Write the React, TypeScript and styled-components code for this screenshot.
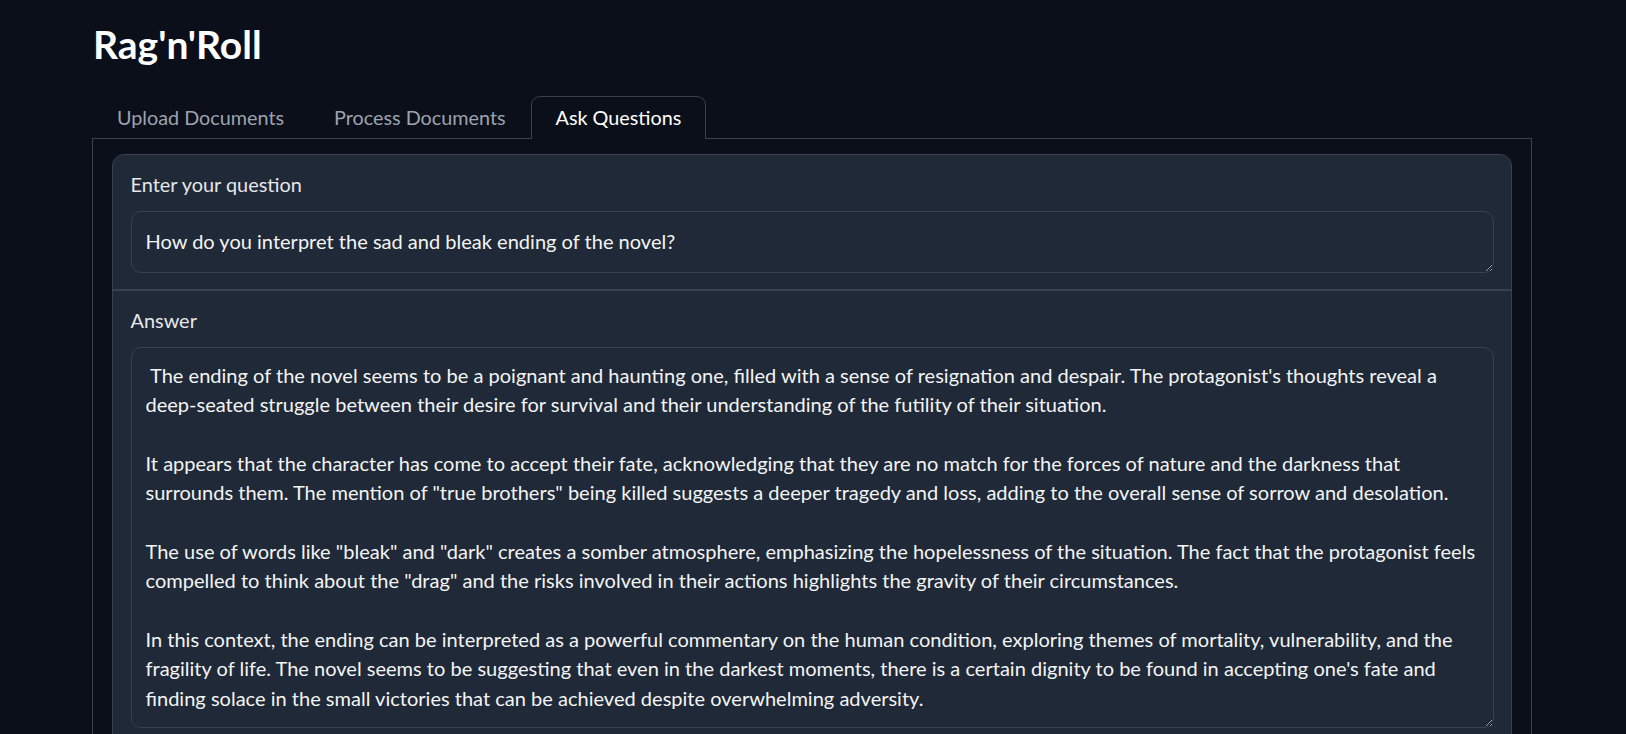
import React from "react";
import styled, { createGlobalStyle } from "styled-components";

const GlobalStyle = createGlobalStyle`
  html, body {
    margin: 0;
    padding: 0;
    background: #0b0f19;
    color-scheme: dark;
  }
  body {
    font-family: Lato, "Noto Sans", sans-serif;
    color: #f3f4f6;
  }
  * { box-sizing: border-box; }
`;

const Page = styled.div`
  max-width: 1442px;
  margin: 0 auto;
  padding-right: 2px;
  display: flex;
  flex-direction: column;
`;

const Title = styled.h1`
  margin: 21px 0 27px 1px;
  font-size: 39px;
  line-height: 1.2;
  font-weight: 700;
  color: #ffffff;
  letter-spacing: 0;
`;

const TabList = styled.div`
  display: flex;
  align-items: flex-end;
  height: 43px;
`;

const Tab = styled.button<{ $active?: boolean }>`
  height: 43px;
  padding: 0 24px;
  margin-bottom: -1px;
  position: relative;
  z-index: 1;
  font-family: inherit;
  font-size: 19.8px;
  line-height: 1;
  color: ${(p) => (p.$active ? "#ffffff" : "#9ca3af")};
  background: ${(p) => (p.$active ? "#0b0f19" : "transparent")};
  border: 1px solid ${(p) => (p.$active ? "#374151" : "transparent")};
  border-bottom: none;
  border-radius: 9px 9px 0 0;
  cursor: pointer;
`;

const Panel = styled.div`
  border: 1px solid #374151;
  border-bottom: none;
  padding: 15.5px 19px 0 19px;
`;

const Form = styled.div`
  display: flex;
  flex-direction: column;
  gap: 2px;
  background: #374151;
  border: 1px solid #374151;
  border-radius: 12px;
  overflow: hidden;
`;

const Block = styled.div<{ $last?: boolean }>`
  background: #1f2937;
  padding: 15px 17.5px ${(p) => (p.$last ? "20px" : "16px")} 17.5px;
  display: flex;
  flex-direction: column;
`;

const Label = styled.label`
  font-size: 19.9px;
  line-height: 28px;
  color: #e5e7eb;
  margin-bottom: 13px;
`;

const TextArea = styled.textarea<{ $height: number; $padY: number }>`
  display: block;
  width: 100%;
  height: ${(p) => p.$height}px;
  padding: ${(p) => p.$padY}px 14px;
  font-family: inherit;
  font-size: 20.05px;
  line-height: 29.35px;
  color: #f3f4f6;
  background: #1f2937;
  border: 1px solid #374151;
  border-radius: 10px;
  outline: none;
  resize: vertical;
  white-space: pre;
  overflow: hidden;
  color-scheme: dark;
`;

const answer = [
  " The ending of the novel seems to be a poignant and haunting one, filled with a sense of resignation and despair. The protagonist's thoughts reveal a",
  "deep-seated struggle between their desire for survival and their understanding of the futility of their situation.",
  "",
  "It appears that the character has come to accept their fate, acknowledging that they are no match for the forces of nature and the darkness that",
  "surrounds them. The mention of \"true brothers\" being killed suggests a deeper tragedy and loss, adding to the overall sense of sorrow and desolation.",
  "",
  "The use of words like \"bleak\" and \"dark\" creates a somber atmosphere, emphasizing the hopelessness of the situation. The fact that the protagonist feels",
  "compelled to think about the \"drag\" and the risks involved in their actions highlights the gravity of their circumstances.",
  "",
  "In this context, the ending can be interpreted as a powerful commentary on the human condition, exploring themes of mortality, vulnerability, and the",
  "fragility of life. The novel seems to be suggesting that even in the darkest moments, there is a certain dignity to be found in accepting one's fate and",
  "finding solace in the small victories that can be achieved despite overwhelming adversity.",
].join("\n");

export default function App() {
  return (
    <>
      <GlobalStyle />
      <Page>
        <Title>Rag'n'Roll</Title>
        <TabList>
          <Tab>Upload Documents</Tab>
          <Tab>Process Documents</Tab>
          <Tab $active>Ask Questions</Tab>
        </TabList>
        <Panel>
          <Form>
            <Block>
              <Label>Enter your question</Label>
              <TextArea
                $height={62}
                $padY={15}
                readOnly
                wrap="off"
                value="How do you interpret the sad and bleak ending of the novel?"
              />
            </Block>
            <Block $last>
              <Label>Answer</Label>
              <TextArea $height={381} $padY={12.5} readOnly wrap="off" value={answer} />
            </Block>
          </Form>
        </Panel>
      </Page>
    </>
  );
}
